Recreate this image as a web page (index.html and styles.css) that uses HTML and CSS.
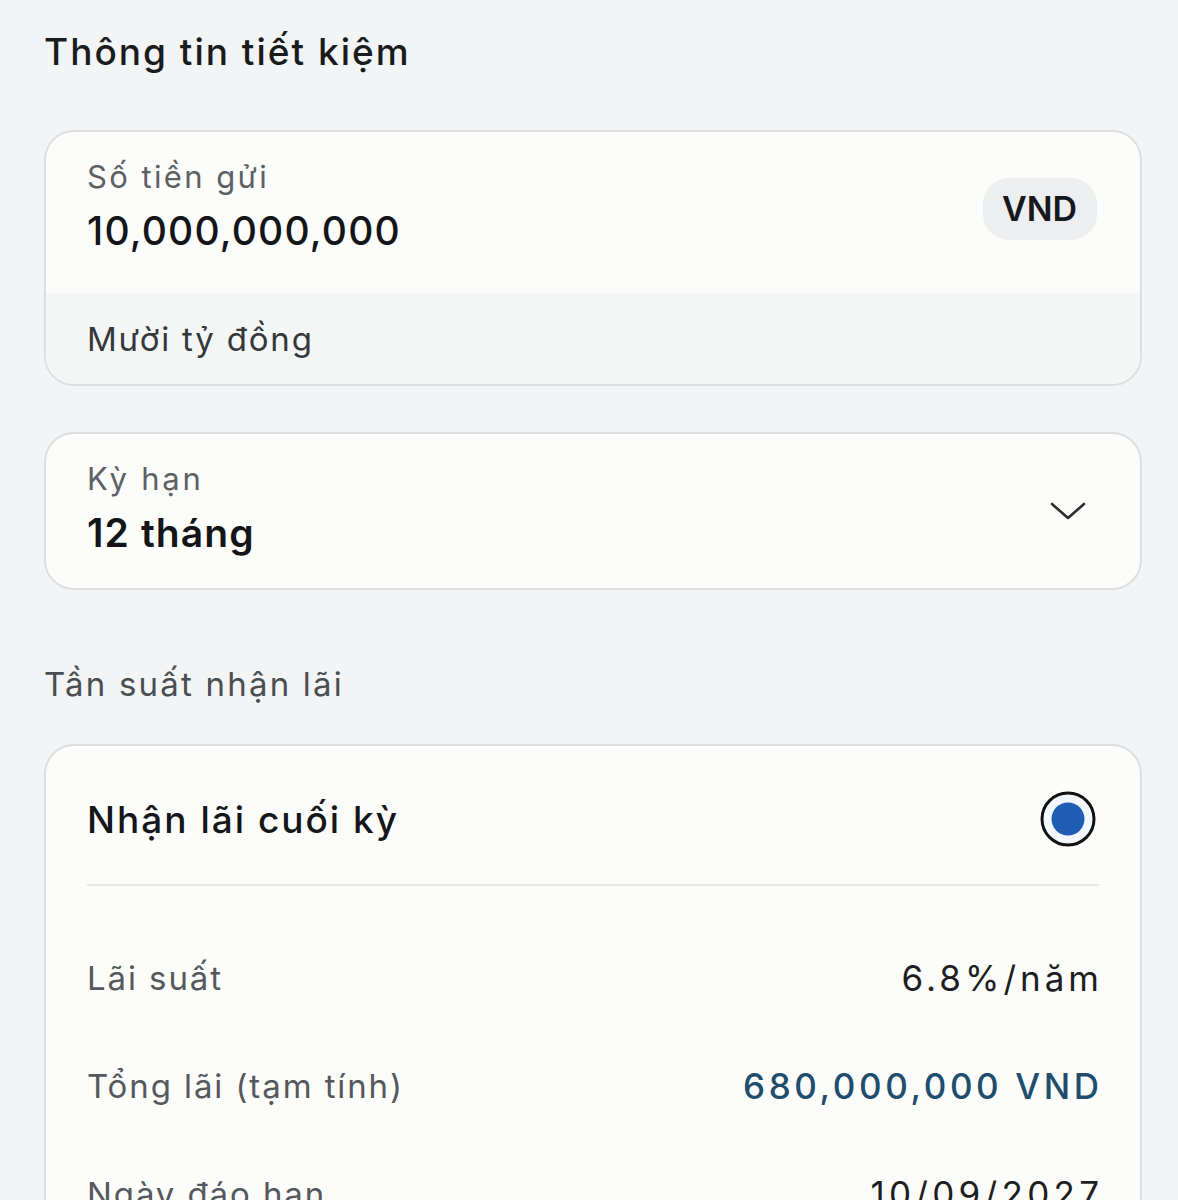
FILE: index.html
```html
<!DOCTYPE html>
<html lang="vi">
<head>
<meta charset="utf-8">
<link rel="stylesheet" href="styles.css">
</head>
<body>
<div class="page">
  <h1 class="title">Thông tin tiết kiệm</h1>

  <div class="card amount-card">
    <div class="amount-top">
      <div class="field">
        <div class="label">Số tiền gửi</div>
        <div class="value">10,000,000,000</div>
      </div>
      <div class="pill">VND</div>
    </div>
    <div class="amount-bottom">Mười tỷ đồng</div>
  </div>

  <div class="card term-card">
    <div class="field">
      <div class="label">Kỳ hạn</div>
      <div class="value">12 tháng</div>
    </div>
    <svg class="chevron" width="36" height="22" viewBox="0 0 36 22">
      <path d="M2 4 L18 18 L34 4" fill="none" stroke="#2a2e33" stroke-width="2.6" stroke-linecap="round" stroke-linejoin="round"/>
    </svg>
  </div>

  <div class="section-label">Tần suất nhận lãi</div>

  <div class="card option-card">
    <div class="option-head">
      <div class="option-title">Nhận lãi cuối kỳ</div>
      <svg class="radio" width="58" height="58" viewBox="0 0 58 58">
        <circle cx="29" cy="29" r="26" fill="#f4f9ff" stroke="#111" stroke-width="3"/>
        <circle cx="29" cy="29" r="16.5" fill="#1f5eb4"/>
      </svg>
    </div>
    <div class="divider"></div>
    <div class="rows">
      <div class="row"><span class="row-label">Lãi suất</span><span class="row-value rate">6.8%/năm</span></div>
      <div class="row"><span class="row-label">Tổng lãi (tạm tính)</span><span class="row-value blue">680,000,000 VND</span></div>
      <div class="row"><span class="row-label">Ngày đáo hạn</span><span class="row-value date">10/09/2027</span></div>
    </div>
  </div>
</div>
</body>
</html>
```

FILE: styles.css
```css
* { box-sizing: border-box; }
html, body {
  margin: 0;
  padding: 0;
  background: #f3f4f5;
  font-family: Inter, "Noto Sans", "Liberation Sans", sans-serif;
  color: #1b1c1e;
  overflow: hidden;
}
.page {
  padding: 26px 36px 0 44px;
  height: 1200px;
}
.title {
  margin: 0;
  font-size: 37px;
  font-weight: 500;
  line-height: 52px;
  color: #1a1b1d;
  letter-spacing: 2px;
}
.card {
  background: #fcfcfa;
  border: 2px solid #dcdedf;
  border-radius: 30px;
  overflow: hidden;
}
.amount-card {
  margin-top: 52px;
  height: 256px;
  display: flex;
  flex-direction: column;
}
.amount-top {
  height: 161px;
  display: flex;
  justify-content: space-between;
  align-items: flex-start;
  padding: 24px 43px 0 41px;
}
.field {
  display: flex;
  flex-direction: column;
}
.label {
  font-size: 31px;
  line-height: 42px;
  color: #5d6065;
  font-weight: 400;
  letter-spacing: 2.4px;
}
.value {
  font-size: 39px;
  line-height: 50px;
  font-weight: 500;
  color: #141518;
  margin-top: 8px;
  letter-spacing: 1.2px;
}
.pill {
  margin-top: 22px;
  background: #eceef0;
  border-radius: 26px;
  padding: 0 20px 0 19px;
  height: 62px;
  line-height: 62px;
  font-size: 34px;
  font-weight: 600;
  color: #17181b;
}
.amount-bottom {
  flex: 1;
  background: #f4f5f5;
  padding: 22px 41px 0;
  font-size: 33px;
  line-height: 48px;
  color: #35373a;
  letter-spacing: 1.8px;
}
.term-card {
  margin-top: 46px;
  height: 158px;
  display: flex;
  justify-content: space-between;
  align-items: flex-start;
  padding: 24px 54px 0 41px;
}
.term-card .label {
  letter-spacing: 2.8px;
}
.term-card .value {
  font-size: 39px;
  font-weight: 600;
  letter-spacing: 1.1px;
}
.chevron {
  margin-top: 42px;
}
.section-label {
  margin-top: 72px;
  font-size: 33px;
  line-height: 44px;
  color: #4a4d51;
  letter-spacing: 2.2px;
}
.option-card {
  margin-top: 38px;
  height: 600px;
  padding: 0 41px;
}
.option-head {
  height: 138px;
  display: flex;
  justify-content: space-between;
  align-items: center;
  padding-top: 8px;
}
.option-title {
  font-size: 37px;
  font-weight: 500;
  color: #15161a;
  letter-spacing: 2px;
}
.radio {
  margin-right: 2px;
}
.divider {
  height: 2px;
  background: #e8e8e5;
}
.rows {
  padding-top: 69px;
  display: flex;
  flex-direction: column;
  gap: 62px;
}
.row {
  display: flex;
  justify-content: space-between;
  align-items: center;
  height: 46px;
  font-size: 33px;
}
.row-label {
  color: #55585c;
  letter-spacing: 1.9px;
}
.row-value {
  color: #1d1e21;
  font-size: 35px;
}
.row-value.rate {
  letter-spacing: 4px;
  margin-right: -4px;
}
.row-value.blue {
  color: #1e4d6d;
  font-weight: 500;
  letter-spacing: 3.6px;
  margin-right: -3.6px;
}
.row-value.date {
  letter-spacing: 4.3px;
  margin-right: -4.3px;
}
```
